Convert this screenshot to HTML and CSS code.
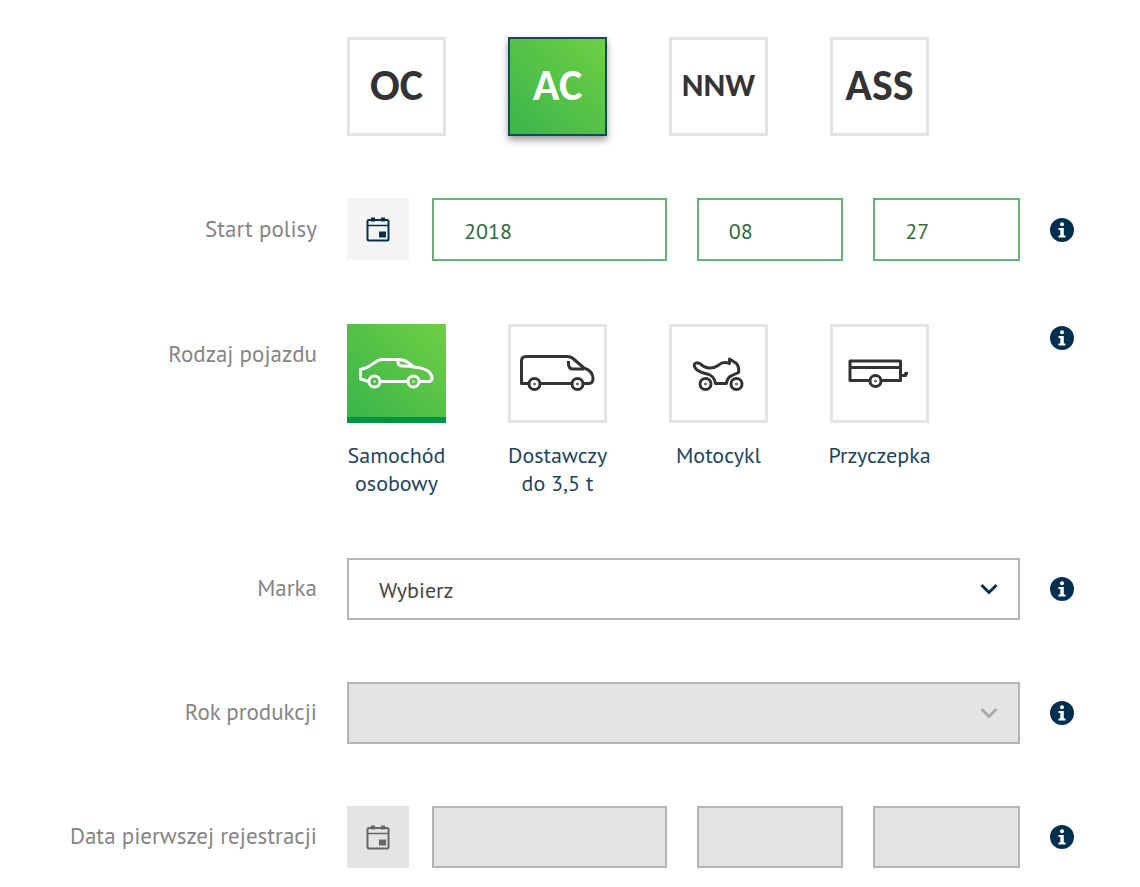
FILE: index.html
```html
<!DOCTYPE html>
<html lang="pl">
<head>
<meta charset="utf-8">
<meta name="viewport" content="width=device-width, initial-scale=1">
<title>Kalkulator polisy</title>
<link rel="stylesheet" href="styles.css">
</head>
<body>
<svg class="sprite" aria-hidden="true">
  <symbol id="calendar" viewBox="0 0 24 26">
    <rect x="1.500" y="4" width="21" height="20.500" rx="1.500" fill="none" stroke="currentColor" stroke-width="2"/>
    <path d="M1.500 9.500H22.500" stroke="currentColor" stroke-width="1.500"/>
    <path d="M7 1.500V5.500M17 1.500V5.500" stroke="currentColor" stroke-width="4"/>
    <rect x="13" y="15.500" width="7" height="6" fill="currentColor"/>
  </symbol>
  <symbol id="info" viewBox="0 0 24 24">
    <circle cx="12" cy="12" r="12" fill="#04304f"/>
    <circle cx="12" cy="6.200" r="2" fill="#fff"/>
    <path d="M8.500 10H13.800V17.500H15.500V19.500H8.500V17.500H10.300V12H8.500Z" fill="#fff"/>
  </symbol>
  <symbol id="chevron" viewBox="0 0 18 12">
    <path d="M1.500 2L9 9.500L16.500 2" fill="none" stroke="currentColor" stroke-width="3"/>
  </symbol>
</svg>

<form class="form">
  <div class="row">
    <div class="field tiles" role="group" aria-label="Zakres ubezpieczenia">
      <button type="button" class="tile cover" aria-pressed="false">OC</button>
      <button type="button" class="tile cover cover-on" aria-pressed="true">AC</button>
      <button type="button" class="tile cover cover-small" aria-pressed="false">NNW</button>
      <button type="button" class="tile cover" aria-pressed="false">ASS</button>
    </div>
  </div>

  <div class="row">
    <label class="name" for="start-year">Start polisy</label>
    <div class="field dates">
      <button type="button" class="pick" aria-label="Wybierz datę"><svg class="cal"><use href="#calendar"/></svg></button>
      <input class="box date" id="start-year" type="text" value="2018">
      <input class="box date" type="text" value="08" aria-label="Miesiąc">
      <input class="box date" type="text" value="27" aria-label="Dzień">
    </div>
    <button type="button" class="help" aria-label="Informacja"><svg class="info"><use href="#info"/></svg></button>
  </div>

  <div class="row row-top">
    <span class="name name-top" id="kind">Rodzaj pojazdu</span>
    <div class="field tiles" role="radiogroup" aria-labelledby="kind">
      <label class="vehicle">
        <span class="stack">
          <input class="tile radio" type="radio" name="kind" checked>
          <svg class="glyph glyph-on" viewBox="0 0 99 99">
            <path d="M21.500 57.500L13.500 55V45.500L20 43.500L31 36.500Q33 35.500 36 35.500H51Q57 35.500 61 38.500L67 43Q80 44.500 83 49Q85.500 52 85 55Q84.500 57.500 81 57.500H72.500M60.500 57.500H33.500"/>
            <path d="M51 36V38.500Q51.500 42 56 42Q62 42 67 43"/>
            <circle cx="27.500" cy="57.500" r="5.500"/><circle cx="66.500" cy="57.500" r="5.500"/>
            <circle class="hub" cx="27.500" cy="57.500" r="1"/><circle class="hub" cx="66.500" cy="57.500" r="1"/>
          </svg>
        </span>
        <span class="caption">Samochód osobowy</span>
      </label>
      <label class="vehicle">
        <span class="stack">
          <input class="tile radio" type="radio" name="kind">
          <svg class="glyph" viewBox="0 0 99 99">
            <path d="M20.500 59.500H13.500V37Q13.500 32.500 18 32.500H59Q62.500 32.500 65 34.500L76 44Q85 47 85 54.500Q85 59.500 81 59.500H75.500M63.500 59.500H32.500"/>
            <path d="M60.500 37V40.500Q61 45 65 45H76"/>
            <circle cx="26.500" cy="60" r="5.500"/><circle cx="69.500" cy="60" r="5.500"/>
            <circle class="hub" cx="26.500" cy="60" r="1"/><circle class="hub" cx="69.500" cy="60" r="1"/>
          </svg>
        </span>
        <span class="caption">Dostawczy do 3,5 t</span>
      </label>
      <label class="vehicle">
        <span class="stack">
          <input class="tile radio" type="radio" name="kind">
          <svg class="glyph" viewBox="0 0 99 99">
            <path d="M46.500 59.500H57.500Q58 53.500 63 51.500L69.500 48.500Q70.500 43.500 67.500 39.500L60.500 35V39.500Q54 37 49 41.500Q45 44.500 39.500 44Q35 43.500 31.500 40Q28 37.500 25.500 40Q24.500 42.500 28 46Q33 49.500 40 50.500Q45.500 53 46.500 59.500Z"/>
            <circle cx="36.500" cy="60" r="5.500"/><circle cx="67.500" cy="60" r="5.500"/>
            <circle class="hub" cx="36.500" cy="60" r="1"/><circle class="hub" cx="67.500" cy="60" r="1"/>
          </svg>
        </span>
        <span class="caption">Motocykl</span>
      </label>
      <label class="vehicle">
        <span class="stack">
          <input class="tile radio" type="radio" name="kind">
          <svg class="glyph" viewBox="0 0 99 99">
            <path d="M39.500 56.500H20V37H70.500V56.500H51.500M20 43.500H70.500M70.500 51.500H75.500V49.500H78"/>
            <circle cx="45.500" cy="57" r="5.500"/><circle class="hub" cx="45.500" cy="57" r="1"/>
          </svg>
        </span>
        <span class="caption">Przyczepka</span>
      </label>
    </div>
    <button type="button" class="help" aria-label="Informacja"><svg class="info"><use href="#info"/></svg></button>
  </div>

  <div class="row">
    <label class="name" for="make">Marka</label>
    <div class="field select">
      <select class="box drop" id="make"><option>Wybierz</option></select>
      <svg class="chevron"><use href="#chevron"/></svg>
    </div>
    <button type="button" class="help" aria-label="Informacja"><svg class="info"><use href="#info"/></svg></button>
  </div>

  <div class="row">
    <label class="name" for="built">Rok produkcji</label>
    <div class="field select">
      <select class="box drop" id="built" disabled><option></option></select>
      <svg class="chevron chevron-off"><use href="#chevron"/></svg>
    </div>
    <button type="button" class="help" aria-label="Informacja"><svg class="info"><use href="#info"/></svg></button>
  </div>

  <div class="row">
    <label class="name" for="reg-year">Data pierwszej rejestracji</label>
    <div class="field dates">
      <button type="button" class="pick" disabled aria-label="Wybierz datę"><svg class="cal"><use href="#calendar"/></svg></button>
      <input class="box" id="reg-year" type="text" disabled>
      <input class="box" type="text" disabled aria-label="Miesiąc">
      <input class="box" type="text" disabled aria-label="Dzień">
    </div>
    <button type="button" class="help" aria-label="Informacja"><svg class="info"><use href="#info"/></svg></button>
  </div>
</form>
</body>
</html>
```
FILE: styles.css
```css
* {
  box-sizing: border-box;
}

body {
  margin: 0;
  background: #fff;
  font-family: "PT Sans", "Noto Sans", sans-serif;
  font-size: 22px;
  color: #444;
}

button,
input,
select {
  margin: 0;
  font: inherit;
}

.sprite {
  display: none;
}

.form {
  display: flex;
  flex-direction: column;
  gap: 62px;
  padding: 37px 66px 19px 20px;
}

.row {
  display: grid;
  grid-template-columns: 297px minmax(0, 1fr) 24px;
  column-gap: 30px;
  align-items: center;
}

.row-top {
  align-items: start;
  margin-bottom: -1px;
}

.name {
  grid-column: 1;
  padding-bottom: 2px;
  text-align: right;
  font-size: 23px;
  line-height: 28px;
  color: #858585;
  white-space: nowrap;
}

.name-top {
  padding-top: 17px;
}

.field {
  grid-column: 2;
}

.tiles {
  display: flex;
  gap: 62px;
}

.tile {
  width: 99px;
  height: 99px;
  padding: 0;
  border: 3px solid #e4e4e4;
  background: #fff;
}

.cover {
  padding-bottom: 3px;
  font-family: Calibri, Carlito, Lato, sans-serif;
  font-size: 44px;
  font-weight: 700;
  color: #333;
}

.cover-small {
  font-size: 33px;
}

.cover-on {
  border: 2px solid #164a58;
  background: linear-gradient(45deg, #39b54a, #6fcf44);
  box-shadow: 0 4px 7px rgba(0, 0, 0, 0.4);
  color: #fff;
}

.dates {
  display: grid;
  grid-template-columns: 55px 8fr 5fr 5fr;
  column-gap: 30px;
}

.pick {
  display: grid;
  place-items: center;
  width: 62px;
  height: 62px;
  padding: 0;
  border: 0;
  background: #f4f4f4;
  color: #04304f;
}

.pick:disabled {
  background: #e4e4e4;
  color: #666;
}

.cal {
  width: 24px;
  height: 26px;
}

.box {
  width: 100%;
  min-width: 0;
  height: 62px;
  padding: 2px 30px 0;
  border: 2px solid #b4b4b4;
  border-radius: 0;
  background: #fff;
  color: #444;
}

.box:disabled {
  background: #e4e4e4;
  opacity: 1;
}

.date {
  height: 63px;
  border-color: #67b376;
  color: #2f6b3c;
}

.select {
  display: grid;
  align-items: center;
}

.drop {
  grid-area: 1 / 1;
  appearance: none;
}

.chevron {
  grid-area: 1 / 1;
  justify-self: end;
  width: 18px;
  height: 12px;
  margin-right: 22px;
  pointer-events: none;
  color: #04304f;
}

.chevron-off {
  color: #aaa;
}

.help {
  grid-column: 3;
  padding: 0;
  border: 0;
  background: none;
}

.row-top .help {
  margin-top: 3px;
}

.info {
  display: block;
  width: 24px;
  height: 24px;
}

.vehicle {
  display: flex;
  flex-direction: column;
  align-items: center;
  gap: 18px;
  width: 99px;
}

.stack {
  display: grid;
  padding-top: 1px;
}

.radio {
  grid-area: 1 / 1;
  appearance: none;
}

.radio:checked {
  border: 0;
  border-bottom: 6px solid #009444;
  background: linear-gradient(45deg, #39b54a, #6fcf44);
}

.glyph {
  grid-area: 1 / 1;
  width: 99px;
  height: 99px;
  pointer-events: none;
  fill: none;
  stroke: #333;
  stroke-width: 3;
  stroke-linejoin: round;
}

.glyph-on {
  stroke: #fff;
}

.glyph .hub {
  stroke-width: 1;
}

.caption {
  text-align: center;
  line-height: 28px;
  color: #1c4460;
}
```
